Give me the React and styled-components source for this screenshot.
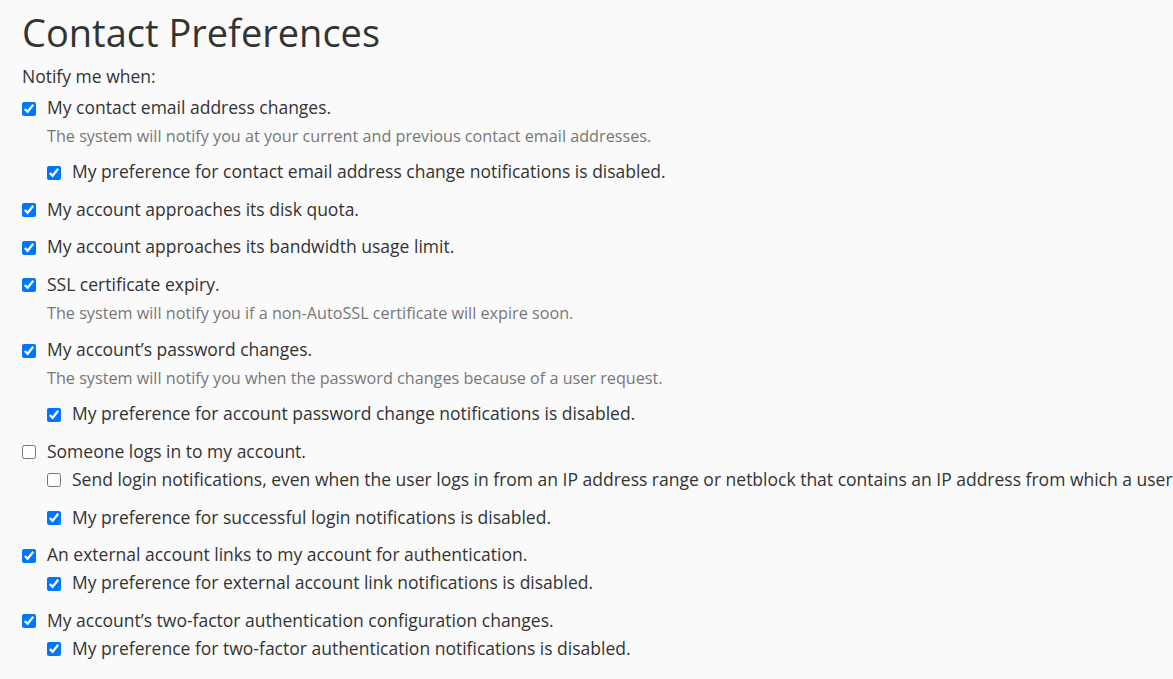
import styled, { createGlobalStyle } from 'styled-components';

const GlobalStyle = createGlobalStyle`
    html, body {
        margin: 0;
        padding: 0;
        background-color: #fafafa;
        overflow: hidden;
    }

    body {
        font-family: 'Open Sans', 'Liberation Sans', sans-serif;
        color: #333;
    }
`;

const preferences = [
    {
        label: 'My contact email address changes.',
        checked: true,
        help: 'The system will notify you at your current and previous contact email addresses.',
        subs: [{ label: 'My preference for contact email address change notifications is disabled.', checked: true }],
    },
    { label: 'My account approaches its disk quota.', checked: true },
    { label: 'My account approaches its bandwidth usage limit.', checked: true },
    {
        label: 'SSL certificate expiry.',
        checked: true,
        help: 'The system will notify you if a non-AutoSSL certificate will expire soon.',
    },
    {
        label: 'My account’s password changes.',
        checked: true,
        help: 'The system will notify you when the password changes because of a user request.',
        subs: [{ label: 'My preference for account password change notifications is disabled.', checked: true }],
    },
    {
        label: 'Someone logs in to my account.',
        checked: false,
        subs: [
            {
                label: 'Send login notifications, even when the user logs in from an IP address range or netblock that contains an IP address from which a user',
                checked: false,
            },
            { label: 'My preference for successful login notifications is disabled.', checked: true },
        ],
    },
    {
        label: 'An external account links to my account for authentication.',
        checked: true,
        subs: [{ label: 'My preference for external account link notifications is disabled.', checked: true }],
    },
    {
        label: 'My account’s two-factor authentication configuration changes.',
        checked: true,
        subs: [{ label: 'My preference for two-factor authentication notifications is disabled.', checked: true }],
    },
];

const Option = ({ label, checked }) => (
    <OptionLabel>
        <Checkbox type="checkbox" defaultChecked={checked} />
        <OptionText>{label}</OptionText>
    </OptionLabel>
);

const App = () => {
    return (
        <Page>
            <GlobalStyle />
            <Heading>Contact Preferences</Heading>
            <Intro>Notify me when:</Intro>
            <List>
                {preferences.map((pref) => (
                    <Item key={pref.label}>
                        <Option label={pref.label} checked={pref.checked} />
                        {pref.help && <Help>{pref.help}</Help>}
                        {pref.subs && (
                            <SubList $afterHelp={!!pref.help}>
                                {pref.subs.map((sub) => (
                                    <Option key={sub.label} label={sub.label} checked={sub.checked} />
                                ))}
                            </SubList>
                        )}
                    </Item>
                ))}
            </List>
        </Page>
    );
};

export default App;

const Page = styled.div`
    padding: 10px 22px;
    white-space: nowrap;
`;

const Heading = styled.h1`
    margin: 0 0 10px;
    font-size: 38px;
    font-weight: 400;
    line-height: 44px;
    color: #333;
`;

const Intro = styled.p`
    margin: 0 0 7px;
    font-size: 17.5px;
    line-height: 24px;
`;

const List = styled.div`
    display: flex;
    flex-direction: column;
    gap: 13.5px;
`;

const Item = styled.div`
    display: flex;
    flex-direction: column;
`;

const OptionLabel = styled.label`
    display: flex;
    align-items: center;
    gap: 11px;
    height: 24px;
    font-size: 17.5px;
    line-height: 24px;
`;

const Checkbox = styled.input`
    width: 14px;
    height: 14px;
    margin: 3px 0 0;
    flex-shrink: 0;
    accent-color: #0075ff;
`;

const OptionText = styled.span`
    color: #333;
`;

const Help = styled.p`
    margin: 7px 0 0 25px;
    font-size: 16.2px;
    line-height: 21px;
    color: #777;
`;

const SubList = styled.div`
    display: flex;
    flex-direction: column;
    gap: 14px;
    margin-top: ${(props) => (props.$afterHelp ? '12px' : '4px')};
    padding-left: 25px;
`;
